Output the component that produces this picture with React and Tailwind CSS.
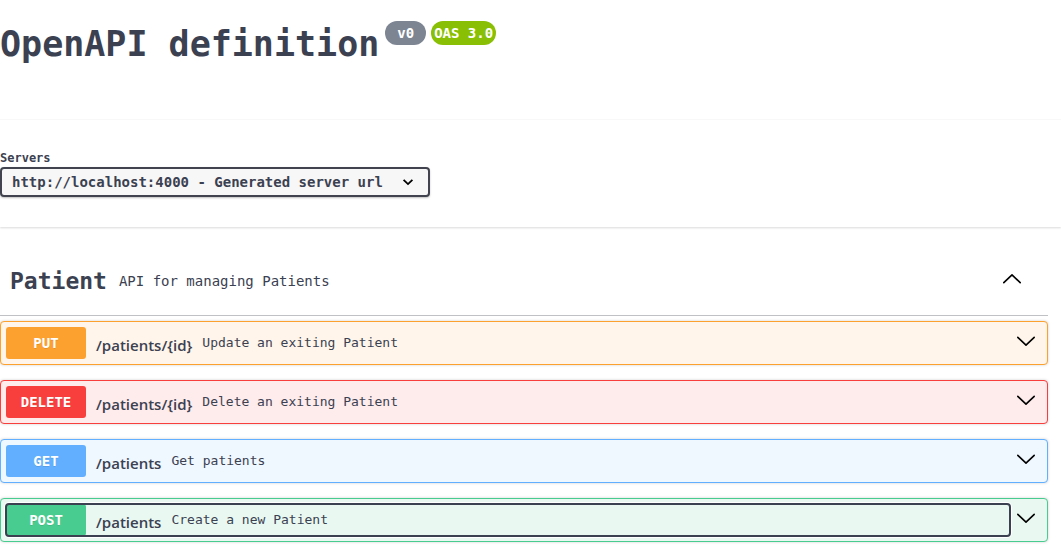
import React from "react";

const OPERATIONS = [
  {
    method: "PUT",
    path: "/patients/{id}",
    summary: "Update an exiting Patient",
    box: "border-[#fca130] bg-[#fff5ea]",
    badge: "bg-[#fca130]",
  },
  {
    method: "DELETE",
    path: "/patients/{id}",
    summary: "Delete an exiting Patient",
    box: "border-[#f93e3e] bg-[#feebeb]",
    badge: "bg-[#f93e3e]",
  },
  {
    method: "GET",
    path: "/patients",
    summary: "Get patients",
    box: "border-[#61affe] bg-[#eff7ff]",
    badge: "bg-[#61affe]",
  },
  {
    method: "POST",
    path: "/patients",
    summary: "Create a new Patient",
    box: "border-[#49cc90] bg-[#e9f9f2]",
    badge: "bg-[#49cc90]",
    focused: true,
  },
];

function Chevron({ up = false }) {
  return (
    <svg
      viewBox="0 0 20 20"
      className="size-5"
      fill="none"
      stroke="#000"
      strokeWidth="1.6"
      strokeLinecap="round"
      strokeLinejoin="round"
      aria-hidden="true"
    >
      <path d={up ? "M1.8 13.7 10 5.8l8.2 7.9" : "M1.8 6.3 10 14.2l8.2-7.9"} />
    </svg>
  );
}

function Operation({ method, path, summary, box, badge, focused }) {
  return (
    <div
      className={`flex h-11 items-center rounded border py-1 pr-[11px] pl-[5px] shadow-[0_0_3px_rgba(0,0,0,0.19)] ${box}`}
    >
      <button
        type="button"
        className={`flex h-8 flex-1 items-center rounded-[3px] text-left ${
          focused ? "outline-2 -outline-offset-1 outline-[#3b4151] ring-2 ring-white" : ""
        }`}
      >
        <span
          className={`w-20 rounded-[3px] text-center text-sm leading-8 font-bold text-white [text-shadow:0_1px_0_rgba(0,0,0,0.1)] ${badge}`}
        >
          {method}
        </span>
        <span className="px-2.5 pt-1 font-['Open_Sans',sans-serif] text-[15px] font-semibold">
          {path}
        </span>
        <span className="text-[13px]">{summary}</span>
      </button>
      <button type="button" aria-label={`Expand ${method} ${path}`} className="mb-1 ml-1.5">
        <Chevron />
      </button>
    </div>
  );
}

export default function App() {
  return (
    <main className="bg-white font-['DejaVu_Sans_Mono',monospace] text-[#3b4151]">
      <header className="flex h-[120px] items-start gap-1.5 border-b border-[#fafafa] pt-5">
        <h1 className="text-[35px] leading-[48px] font-bold">OpenAPI definition</h1>
        <div className="flex gap-[5px] pt-px text-sm leading-6 font-bold text-white">
          <span className="rounded-full bg-[#7d8492] px-3">v0</span>
          <span className="rounded-full bg-[#89bf04] px-[3px]">OAS 3.0</span>
        </div>
      </header>

      <section className="flex flex-col items-start pt-[30px] pb-[30px] shadow-[0_1px_2px_rgba(0,0,0,0.15)]">
        <label htmlFor="servers" className="text-xs leading-[17px] font-bold">
          Servers
        </label>
        <div className="relative w-[430px] max-w-full">
          <select
            id="servers"
            className="block h-[30px] w-full appearance-none rounded border-2 border-[#41444e] bg-[#f7f7f7] pr-10 pl-2.5 text-sm font-bold shadow-[0_1px_2px_rgba(0,0,0,0.25)]"
          >
            <option>http://localhost:4000 - Generated server url</option>
          </select>
          <svg
            viewBox="0 0 20 20"
            className="pointer-events-none absolute top-1/2 right-3 size-5 -translate-y-1/2"
            fill="none"
            stroke="#000"
            strokeWidth="1.8"
            aria-hidden="true"
          >
            <path d="M5.6 7.8 10 12.1l4.4-4.3" />
          </svg>
        </div>
      </section>

      <section className="pt-5 pr-[13px] pb-4">
        <div className="flex h-[69px] items-center gap-3 border-b border-[#bfc1c5] pr-[26px] pl-2.5">
          <h2 className="text-[23px] font-bold">Patient</h2>
          <p className="flex-1 text-sm">API for managing Patients</p>
          <button type="button" aria-label="Collapse Patient" className="mb-1">
            <Chevron up />
          </button>
        </div>
        <div className="flex flex-col gap-[15px] pt-[5px]">
          {OPERATIONS.map((op) => (
            <Operation key={op.method} {...op} />
          ))}
        </div>
      </section>
    </main>
  );
}
